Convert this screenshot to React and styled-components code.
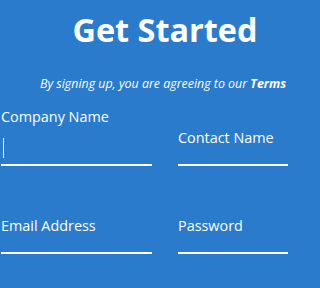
import styled, { createGlobalStyle } from "styled-components";

const GlobalStyle = createGlobalStyle`
  html, body {
    margin: 0;
    padding: 0;
    background: #2a7bcc;
    overflow: hidden;
  }
  body {
    font-family: "Open Sans", "DejaVu Sans", sans-serif;
    color: #ffffff;
  }
`;

const Viewport = styled.div`
  width: 288px;
  height: 288px;
  overflow: hidden;
  background: #2a7bcc;
`;

const Page = styled.div`
  width: 328px;
  padding-left: 1px;
`;

const Title = styled.h1`
  margin: 8px 0 0;
  font-size: 32.4px;
  line-height: 42px;
  font-weight: 700;
  text-align: center;
`;

const Subtitle = styled.p`
  margin: 25px 0 0;
  padding-left: 39px;
  font-size: 12.4px;
  line-height: 18px;
  font-style: italic;
  white-space: nowrap;

  b {
    font-weight: 700;
  }
`;

const Form = styled.form`
  display: grid;
  grid-template-columns: 151px 151px;
  column-gap: 26px;
  row-gap: 34px;
  margin-top: 19px;
`;

const Field = styled.div`
  position: relative;
  padding-top: 24px;
`;

const Label = styled.label`
  position: absolute;
  left: 0;
  top: ${(p) => (p.$raised ? "-5px" : "16px")};
  font-size: 14.4px;
  line-height: 20px;
  color: #ffffff;
  white-space: nowrap;
`;

const Input = styled.input`
  display: block;
  box-sizing: border-box;
  width: 100%;
  height: 30px;
  padding: 0 2px;
  border: none;
  border-bottom: 2px solid #ffffff;
  background: transparent;
  color: #ffffff;
  font: inherit;
  outline: none;
`;

const Caret = styled.span`
  position: absolute;
  left: 2px;
  top: 26px;
  width: 1px;
  height: 20px;
  background: #ffffff;
`;

const fields = [
  { name: "Company Name", focused: true },
  { name: "Contact Name" },
  { name: "Email Address" },
  { name: "Password", type: "password" },
];

export default function App() {
  return (
    <>
      <GlobalStyle />
      <Viewport>
        <Page>
          <Title>Get Started</Title>
          <Subtitle>
            By signing up, you are agreeing to our <b>Terms</b>
          </Subtitle>
          <Form>
            {fields.map((f) => (
              <Field key={f.name}>
                <Label $raised={f.focused}>{f.name}</Label>
                <Input type={f.type || "text"} />
                {f.focused && <Caret />}
              </Field>
            ))}
          </Form>
        </Page>
      </Viewport>
    </>
  );
}
